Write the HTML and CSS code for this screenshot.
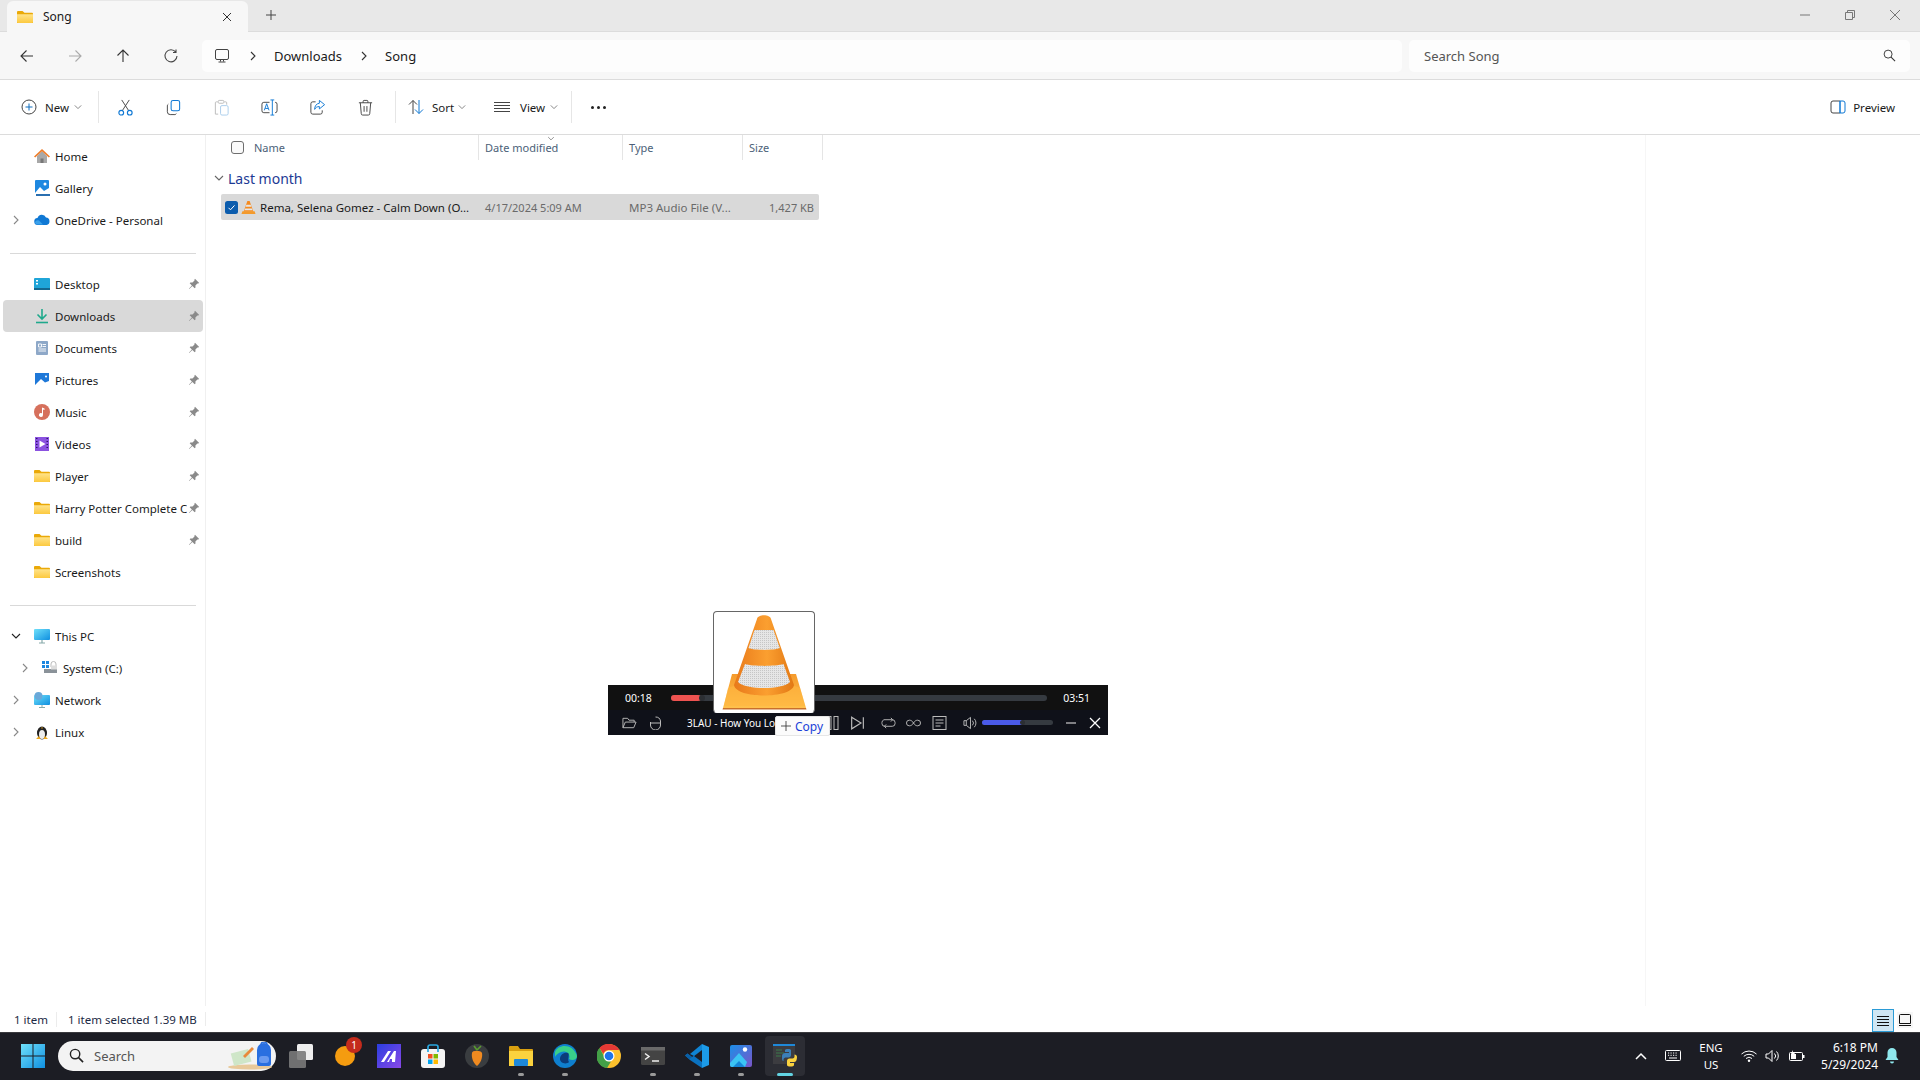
FILE: index.html
```html
<!DOCTYPE html>
<html lang="en">
<head>
<meta charset="utf-8">
<title>Song - File Explorer</title>
<link rel="stylesheet" href="styles.css">
</head>
<body>
<svg class="defs" width="0" height="0">
  <defs>
    <linearGradient id="fg" x1="0" y1="0" x2="0" y2="1"><stop offset="0" stop-color="#ffe38a"/><stop offset="1" stop-color="#fcc93f"/></linearGradient>
    <linearGradient id="orange" x1="0" y1="0" x2="1" y2="0"><stop offset="0" stop-color="#e8791a"/><stop offset=".55" stop-color="#fb9f30"/><stop offset="1" stop-color="#e27814"/></linearGradient>
    <pattern id="hatch" width="2" height="2" patternUnits="userSpaceOnUse"><rect width="2" height="2" fill="#e6e6e6"/><rect width="1" height="1" fill="#c6c6c6"/></pattern>
    <linearGradient id="baseg" x1="0" y1="0" x2="0" y2="1"><stop offset="0" stop-color="#f59a2c"/><stop offset="1" stop-color="#ffc14c"/></linearGradient>
    <linearGradient id="blue1" x1="0" y1="0" x2="1" y2="1"><stop offset="0" stop-color="#6fe0fa"/><stop offset="1" stop-color="#0f8fe0"/></linearGradient>
    <linearGradient id="ms" x1="0" y1="0" x2="1" y2="1"><stop offset="0" stop-color="#2a3ee0"/><stop offset="1" stop-color="#8a48e8"/></linearGradient>
    <linearGradient id="ph" x1="0" y1="0" x2="1" y2="1"><stop offset="0" stop-color="#1b8fe8"/><stop offset="1" stop-color="#7a55c8"/></linearGradient>
    <symbol id="folder" viewBox="0 0 16 16"><path d="M0 3a1 1 0 0 1 1-1h4.500l2 1.800H15a1 1 0 0 1 1 1V14H0z" fill="#eaa908"/><path d="M0 5.200h16V13a1 1 0 0 1-1 1H1a1 1 0 0 1-1-1z" fill="url(#fg)"/></symbol>
    <symbol id="pin" viewBox="0 0 12 12"><path d="M7 .8l4.200 4.200-1.100.6-.7-.2-2 2 .1 2.100-.8.7-2.300-2.300L1.200 11l-.3-.3 3-3.200-2.200-2.300.7-.8 2.100.1 2-2-.1-.7z" fill="#8a8a8a"/></symbol>
    <symbol id="chr" viewBox="0 0 10 10"><path d="M3 1l4 4-4 4" fill="none" stroke="currentColor" stroke-width="1.100"/></symbol>
    <symbol id="chd" viewBox="0 0 10 10"><path d="M1 3l4 4 4-4" fill="none" stroke="currentColor" stroke-width="1.100"/></symbol>
    <symbol id="cone" viewBox="0 0 16 16"><path d="M6.800 1h2.400l4 11.500H2.800z" fill="#f58a1f"/><path d="M5.700 5h4.600l.7 2.300H5z" fill="#e6e6e6"/><path d="M4.400 9h7.200l.7 2H3.700z" fill="#e6e6e6"/><path d="M1.500 12h13l1 3H.5z" fill="#f39a2c"/></symbol>
  </defs>
</svg>

<header class="tabstrip">
  <div class="tab">
    <svg class="ic16"><use href="#folder"/></svg>
    <span class="tab-title">Song</span>
    <svg class="tab-x" viewBox="0 0 10 10"><path d="M1 1l8 8M9 1l-8 8" stroke="#333" stroke-width="1" fill="none"/></svg>
  </div>
  <svg class="tab-plus" viewBox="0 0 12 12"><path d="M6 1v10M1 6h10" stroke="#444" stroke-width="1" fill="none"/></svg>
  <div class="winctl">
    <svg viewBox="0 0 10 10"><path d="M0 5h10" stroke="#777" stroke-width="1"/></svg>
    <svg viewBox="0 0 10 10"><path d="M.5 2.500h7v7h-7zM2.500 2.500v-2h7v7h-2" stroke="#777" stroke-width="1" fill="none"/></svg>
    <svg viewBox="0 0 10 10"><path d="M0 0l10 10M10 0L0 10" stroke="#777" stroke-width="1"/></svg>
  </div>
</header>

<nav class="navbar">
  <div class="navbtns">
    <svg viewBox="0 0 16 16"><path d="M14 8H2.500M7.500 2.500L2 8l5.500 5.500" stroke="#333" stroke-width="1.100" fill="none"/></svg>
    <svg viewBox="0 0 16 16"><path d="M2 8h11.500M8.500 2.500L14 8l-5.500 5.500" stroke="#aaa" stroke-width="1.100" fill="none"/></svg>
    <svg viewBox="0 0 16 16"><path d="M8 14V2.500M2.500 7.500L8 2l5.500 5.500" stroke="#333" stroke-width="1.100" fill="none"/></svg>
    <svg viewBox="0 0 16 16"><path d="M12.800 4.200A6 6 0 1 0 14 8M13 1.500v3h-3" stroke="#444" stroke-width="1.100" fill="none"/></svg>
  </div>
  <div class="address">
    <svg class="pc" viewBox="0 0 16 16"><rect x="1.500" y="1.500" width="13" height="10" rx="1.500" stroke="#444" fill="none"/><path d="M6.500 11.500v2M9.500 11.500v2M4.500 14h7" stroke="#444" fill="none"/></svg>
    <svg class="crumb-ch crumb-first"><use href="#chr"/></svg>
    <span class="crumb">Downloads</span>
    <svg class="crumb-ch"><use href="#chr"/></svg>
    <span class="crumb">Song</span>
  </div>
  <div class="search">
    <span>Search Song</span>
    <svg viewBox="0 0 14 14"><circle cx="5.500" cy="5.500" r="4.300" stroke="#333" fill="none"/><path d="M8.700 8.700l4.300 4.300" stroke="#333" stroke-width="1.200"/></svg>
  </div>
</nav>

<section class="toolbar">
  <div class="tb-text tb-new">
    <svg class="ic16" viewBox="0 0 16 16"><circle cx="8" cy="8" r="7" stroke="#444" fill="none"/><path d="M8 4.500v7M4.500 8h7" stroke="#0f6cbd" fill="none"/></svg>
    <span>New</span><svg class="mini"><use href="#chd"/></svg>
  </div>
  <i class="sep"></i>
  <div class="tb-icon"><svg viewBox="0 0 18 18"><path d="M5 1l7.500 11.500M13 1L5.500 12.500" stroke="#444" fill="none"/><circle cx="4.500" cy="14.500" r="2.500" stroke="#0f78d4" stroke-width="1.200" fill="none"/><circle cx="13.500" cy="14.500" r="2.500" stroke="#0f78d4" stroke-width="1.200" fill="none"/></svg></div>
  <div class="tb-icon"><svg viewBox="0 0 18 18"><rect x="6.500" y="1.500" width="9" height="11" rx="2" stroke="#0f78d4" stroke-width="1.100" fill="none"/><path d="M3.500 5.500a2 2 0 0 0-1 1.700v6.300a3 3 0 0 0 3 3h5a2 2 0 0 0 1.500-1" stroke="#444" fill="none"/></svg></div>
  <div class="tb-icon"><svg viewBox="0 0 18 18"><path d="M5 3H3.500a1 1 0 0 0-1 1v12h3M12 3h1.500a1 1 0 0 1 1 1v2" stroke="#bbb" fill="none"/><rect x="5.500" y="1.500" width="6" height="3" rx="1" stroke="#bbb" fill="none"/><rect x="8" y="7" width="8" height="10" rx="1.500" stroke="#a9cdec" fill="none"/></svg></div>
  <div class="tb-icon"><svg viewBox="0 0 18 18"><path d="M9 3.500H3a2 2 0 0 0-2 2v7a2 2 0 0 0 2 2h6M15 3.500a2 2 0 0 1 2 2v7a2 2 0 0 1-2 2" stroke="#444" fill="none"/><path d="M10 1h4M10 17h4M12 1v16" stroke="#0f78d4" fill="none"/><path d="M3.500 12l2.500-7 2.500 7M4.500 10h3" stroke="#0f78d4" fill="none"/></svg></div>
  <div class="tb-icon"><svg viewBox="0 0 18 18"><path d="M7 3H4a2 2 0 0 0-2 2v9a2 2 0 0 0 2 2h8a2 2 0 0 0 2-2v-2" stroke="#444" fill="none"/><path d="M11 1.500l5.500 4.500-5.500 4.500V8c-2.500 0-4 1-5 3 0-3.500 1.500-6 5-6.500z" stroke="#0f78d4" fill="none"/></svg></div>
  <div class="tb-icon"><svg viewBox="0 0 18 18"><path d="M2 4h14M6.500 4V2.500a1 1 0 0 1 1-1h3a1 1 0 0 1 1 1V4M3.500 4l1 11.500a1.500 1.500 0 0 0 1.500 1.500h6a1.500 1.500 0 0 0 1.500-1.500l1-11.500M7.500 7.500v6M10.500 7.500v6" stroke="#444" fill="none"/></svg></div>
  <i class="sep sep-b"></i>
  <div class="tb-text tb-sort">
    <svg class="ic16" viewBox="0 0 16 16"><path d="M5 15V1.500M1 5.500l4-4 4 4" stroke="#444" fill="none"/><path d="M11 1v13.500M7 10.500l4 4 4-4" stroke="#0f78d4" fill="none"/></svg>
    <span>Sort</span><svg class="mini"><use href="#chd"/></svg>
  </div>
  <div class="tb-text tb-view">
    <svg class="ic16" viewBox="0 0 16 16"><path d="M0 3.500h16M0 6.500h16M0 9.500h16M0 12.500h16" stroke="#444" fill="none"/></svg>
    <span>View</span><svg class="mini"><use href="#chd"/></svg>
  </div>
  <i class="sep sep-c"></i>
  <div class="dots"><i></i><i></i><i></i></div>
  <div class="tb-text tb-preview">
    <svg class="ic16" viewBox="0 0 16 16"><path d="M10 2H3a2 2 0 0 0-2 2v8a2 2 0 0 0 2 2h7" stroke="#444" fill="none"/><path d="M10 2h3a2 2 0 0 1 2 2v8a2 2 0 0 1-2 2h-3zM10 2v12" stroke="#0f78d4" fill="none"/></svg>
    <span>Preview</span>
  </div>
</section>

<main class="main">
  <aside class="side">
    <div class="row">
      <span class="arrow"></span>
      <svg class="ic16" viewBox="0 0 16 16"><path d="M3 8v7h10V8L8 3z" fill="#a8a8a8"/><path d="M6.500 15v-4.500h3V15z" fill="#777"/><path d="M0 8.500L8 1l8 7.500-1.200 1L8 3.300 1.200 9.500z" fill="#ee7c28"/></svg>
      <span class="label">Home</span>
    </div>
    <div class="row">
      <span class="arrow"></span>
      <svg class="ic16" viewBox="0 0 16 16"><rect x="1" y="0" width="14" height="14" rx="1" fill="#1e88e0"/><path d="M1 13l5-6 4 4 5-3v6H1z" fill="#fff"/><circle cx="11" cy="4" r="1.500" fill="#fff"/><rect x="2" y="14" width="14" height="2" fill="#2a6fb0"/></svg>
      <span class="label">Gallery</span>
    </div>
    <div class="row">
      <svg class="arrow"><use href="#chr"/></svg>
      <svg class="ic16" viewBox="0 0 16 16"><path d="M4 13a3.500 3.500 0 0 1-.5-7A4.500 4.500 0 0 1 12 5.500a3.800 3.800 0 0 1 .5 7.500z" fill="#0f78d4"/><path d="M1 10.500a3 3 0 0 1 4-2l4 4H3a2.500 2.500 0 0 1-2-2z" fill="#3aa0ea"/></svg>
      <span class="label">OneDrive - Personal</span>
    </div>
    <hr class="rule rule-b">
    <div class="row">
      <span class="arrow"></span>
      <svg class="ic16" viewBox="0 0 16 16"><rect y="2" width="16" height="12" rx="1" fill="#1fa5d8"/><rect y="12" width="16" height="2" fill="#14688f"/><path d="M2 4h2v1.500H2zM2 7h2v1.500H2z" fill="#fff"/></svg>
      <span class="label">Desktop</span><svg class="pin"><use href="#pin"/></svg>
    </div>
    <div class="row sel">
      <span class="arrow"></span>
      <svg class="ic16" viewBox="0 0 16 16"><path d="M8 1v9.500M3.500 6.500L8 11l4.500-4.500" stroke="#1fa98c" stroke-width="1.600" fill="none"/><path d="M2 14.500h12" stroke="#1fa98c" stroke-width="1.600"/></svg>
      <span class="label">Downloads</span><svg class="pin"><use href="#pin"/></svg>
    </div>
    <div class="row">
      <span class="arrow"></span>
      <svg class="ic16" viewBox="0 0 16 16"><rect x="2" y="1" width="12" height="14" rx="1" fill="#8ea8c8"/><path d="M4.500 4h3v3h-3zM8.500 4.500H12M8.500 6.500H12M4.500 9H12M4.500 11H12" stroke="#fff" stroke-width=".9" fill="none"/></svg>
      <span class="label">Documents</span><svg class="pin"><use href="#pin"/></svg>
    </div>
    <div class="row">
      <span class="arrow"></span>
      <svg class="ic16" viewBox="0 0 16 16"><rect x="1" y="1" width="14" height="14" fill="#1e78d8"/><path d="M1 13l6-6 4 3.500 4-1.500v6H1z" fill="#fff"/><circle cx="12" cy="4.500" r="1" fill="#fff"/></svg>
      <span class="label">Pictures</span><svg class="pin"><use href="#pin"/></svg>
    </div>
    <div class="row">
      <span class="arrow"></span>
      <svg class="ic16" viewBox="0 0 16 16"><circle cx="8" cy="8" r="8" fill="#d6705c"/><path d="M8 3.500l2.500 1v1.500L9 5.500V11a2 2 0 1 1-1-1.700z" fill="#fff"/></svg>
      <span class="label">Music</span><svg class="pin"><use href="#pin"/></svg>
    </div>
    <div class="row">
      <span class="arrow"></span>
      <svg class="ic16" viewBox="0 0 16 16"><rect x="1" y="1" width="14" height="14" fill="#8b52e0"/><path d="M5.500 4.500L11.500 8l-6 3.500z" fill="#fff"/><path d="M2 2.500h1.500M2 5.500h1.500M2 8.500h1.500M2 11.500h1.500M12.500 2.500H14M12.500 5.500H14M12.500 8.500H14M12.500 11.500H14" stroke="#2c1566" stroke-width="1.200"/></svg>
      <span class="label">Videos</span><svg class="pin"><use href="#pin"/></svg>
    </div>
    <div class="row">
      <span class="arrow"></span>
      <svg class="ic16"><use href="#folder"/></svg>
      <span class="label">Player</span><svg class="pin"><use href="#pin"/></svg>
    </div>
    <div class="row">
      <span class="arrow"></span>
      <svg class="ic16"><use href="#folder"/></svg>
      <span class="label">Harry Potter Complete Co</span><svg class="pin"><use href="#pin"/></svg>
    </div>
    <div class="row">
      <span class="arrow"></span>
      <svg class="ic16"><use href="#folder"/></svg>
      <span class="label">build</span><svg class="pin"><use href="#pin"/></svg>
    </div>
    <div class="row">
      <span class="arrow"></span>
      <svg class="ic16"><use href="#folder"/></svg>
      <span class="label">Screenshots</span>
    </div>
    <hr class="rule rule-b">
    <div class="row">
      <svg class="arrow dark"><use href="#chd"/></svg>
      <svg class="ic16" viewBox="0 0 16 16"><rect y="1" width="16" height="11" rx="1" fill="url(#blue1)"/><path d="M8 12v2.500M5 15h6" stroke="#8aa" stroke-width="1.200"/></svg>
      <span class="label">This PC</span>
    </div>
    <div class="row row-sub">
      <svg class="arrow"><use href="#chr"/></svg>
      <svg class="ic16" viewBox="0 0 16 16"><path d="M0 1h3v3H0zM4 1h3v3H4zM0 5h3v3H0zM4 5h3v3H4z" fill="#1e88e0"/><rect x="2" y="9" width="13" height="4" fill="#8a9299"/><path d="M9 7V4a2.500 2.500 0 0 1 5 0v3" stroke="#bbb" fill="none"/><rect x="9" y="5.500" width="6" height="4" fill="#ddd"/></svg>
      <span class="label">System (C:)</span>
    </div>
    <div class="row">
      <svg class="arrow"><use href="#chr"/></svg>
      <svg class="ic16" viewBox="0 0 16 16"><rect y="3" width="16" height="10" rx="1" fill="url(#blue1)"/><circle cx="4.500" cy="4" r="4" fill="#6aa8d8"/><path d="M8 13v2M5 15.500h6" stroke="#8aa" stroke-width="1"/></svg>
      <span class="label">Network</span>
    </div>
    <div class="row">
      <svg class="arrow"><use href="#chr"/></svg>
      <svg class="ic16" viewBox="0 0 16 16"><ellipse cx="8" cy="9" rx="5" ry="6.500" fill="#222"/><ellipse cx="8" cy="10.500" rx="3" ry="4.500" fill="#eee"/><path d="M7 3.500h2l-1 1.500z" fill="#eda71c"/><path d="M2 15l3-3 1.500 3zM14 15l-3-3-1.500 3z" fill="#eda71c"/></svg>
      <span class="label">Linux</span>
    </div>
  </aside>

  <section class="files">
    <svg class="sortmark"><use href="#chd"/></svg>
    <div class="cols">
      <div class="col col-name"><span class="box"></span><span>Name</span></div>
      <div class="col">Date modified</div>
      <div class="col">Type</div>
      <div class="col">Size</div>
    </div>
    <div class="group">
      <svg class="group-ch"><use href="#chd"/></svg>
      <span>Last month</span>
    </div>
    <div class="file">
      <div class="file-name">
        <svg class="check" viewBox="0 0 13 13"><rect width="13" height="13" rx="2.500" fill="#0b5cad"/><path d="M3.500 6.800l2 2 4-4.400" stroke="#fff" fill="none"/></svg>
        <svg class="ic15"><use href="#cone"/></svg>
        <span>Rema, Selena Gomez - Calm Down (O...</span>
      </div>
      <div class="file-meta">4/17/2024 5:09 AM</div>
      <div class="file-meta file-type">MP3 Audio File (V...</div>
      <div class="file-meta file-size">1,427 KB</div>
    </div>
    <div class="preview-line"></div>
  </section>
</main>

<footer class="status">
  <span class="st-a">1 item</span>
  <span class="st-b">1 item selected</span>
  <span class="st-c">1.39 MB</span>
  <i class="st-line"></i>
  <div class="views">
    <span class="v v-on"><svg viewBox="0 0 14 14"><path d="M1 2.500h12M1 5.500h12M1 8.500h12M1 11.500h12" stroke="#111" fill="none"/></svg></span>
    <span class="v"><svg viewBox="0 0 14 14"><path d="M2.500 1.500h9a1 1 0 0 1 1 1v8h-11v-8a1 1 0 0 1 1-1zM1 12.500h12" stroke="#111" fill="none"/></svg></span>
  </div>
</footer>

<div class="taskbar">
  <div class="slot">
    <svg class="t24" viewBox="0 0 24 24"><path d="M0 0h11.500v11.500H0zM12.500 0H24v11.500H12.500zM0 12.500h11.500V24H0zM12.500 12.500H24V24H12.500z" fill="url(#blue1)"/></svg>
  </div>
  <div class="tsearch">
    <svg viewBox="0 0 16 16"><circle cx="6.500" cy="6.500" r="5" stroke="#222" stroke-width="1.500" fill="none"/><path d="M10.200 10.200l4.800 4.800" stroke="#222" stroke-width="1.700"/></svg>
    <span>Search</span>
    <svg class="tsearch-art" viewBox="0 0 48 28"><ellipse cx="22" cy="25" rx="22" ry="2.500" fill="#e8c99a"/><rect x="4" y="9" width="18" height="13" fill="#cfe6c8" transform="rotate(-15 13 15)"/><path d="M15 14l9-9 2 2-9 9z" fill="#e88a3a"/><path d="M29 22V8a7 7 0 0 1 14 0v14a2 2 0 0 1-2 2H31a2 2 0 0 1-2-2z" fill="#2a6fe0"/><path d="M33 3a3 3 0 0 1 6 0" stroke="#2a6fe0" stroke-width="1.500" fill="none"/><rect x="31" y="14" width="10" height="7" rx="3" fill="#6a9af0"/></svg>
  </div>
  <div class="slot">
    <svg class="t24" viewBox="0 0 24 24"><rect x="8" y="0" width="16" height="16" rx="1.500" fill="#eee"/><rect x="0" y="7" width="17" height="17" rx="1.500" fill="#7a7a7a" fill-opacity=".9"/></svg>
  </div>
  <div class="slot">
    <svg class="t24" viewBox="0 0 24 24"><circle cx="12" cy="12" r="10" fill="#f59c10"/></svg>
    <b class="badge">1</b>
  </div>
  <div class="slot">
    <svg class="t24" viewBox="0 0 24 24"><rect width="24" height="24" fill="url(#ms)"/><path d="M4 18l7-11h3L7 18zM10 18l7-11h2l-1 11h-3v-3h-2l-1 3z" fill="#fff"/></svg>
  </div>
  <div class="slot">
    <svg class="t24" viewBox="0 0 24 24"><rect y="5" width="24" height="19" rx="3" fill="#f4f4f4"/><path d="M7 8V3a2 2 0 0 1 2-2h6a2 2 0 0 1 2 2v5" stroke="#2aa8e0" stroke-width="1.700" fill="none"/><path d="M7 10h4.500v4.500H7z" fill="#f25022"/><path d="M12.500 10H17v4.500h-4.500z" fill="#7fba00"/><path d="M7 15.500h4.500V20H7z" fill="#00a4ef"/><path d="M12.500 15.500H17V20h-4.500z" fill="#ffb900"/></svg>
  </div>
  <div class="slot">
    <svg class="t24" viewBox="0 0 24 24"><circle cx="12" cy="12" r="12" fill="#3a3d40"/><path d="M7 9c0-3 9-3 10 0 1 5-2 11-5 13-3-2-6-8-5-13z" fill="#f08a20"/><path d="M12 6l-3-4M12 6l4-4" stroke="#5a9a30" stroke-width="1.700"/></svg>
  </div>
  <div class="slot on">
    <svg class="t24" viewBox="0 0 24 24"><path d="M0 3a1 1 0 0 1 1-1h8l2 3h12a1 1 0 0 1 1 1v16H0z" fill="#d9a010"/><path d="M0 7h24v15H0z" fill="#fbd23e"/><rect x="5" y="15" width="14" height="7" rx="1" fill="#1e88d8"/></svg>
  </div>
  <div class="slot on">
    <svg class="t24" viewBox="0 0 24 24"><circle cx="12" cy="12" r="12" fill="#0f7fce"/><path d="M2 8C5 0 20-1 24 12c0 4-5 5-8 3 2-5-3-9-8-7-3 1-5 3-6 5z" fill="#39d08a"/><path d="M7 15c0-4 4-7 8-6 2 1-1 7 1 9-3 3-9 1-9-3z" fill="#0b3c7a"/></svg>
  </div>
  <div class="slot">
    <svg class="t24" viewBox="0 0 24 24"><circle cx="12" cy="12" r="12" fill="#fbc02d"/><path d="M12 0a12 12 0 0 1 10.400 6H12a6 6 0 0 0-5.700 4L2.500 4A12 12 0 0 1 12 0z" fill="#e53935"/><path d="M2.500 4l5 9a6 6 0 0 0 6.500 4.500L10 24A12 12 0 0 1 2.500 4z" fill="#43a047"/><circle cx="12" cy="12" r="5.500" fill="#fff"/><circle cx="12" cy="12" r="4.300" fill="#1e74e8"/></svg>
  </div>
  <div class="slot on">
    <svg class="t24" viewBox="0 0 24 24"><rect y="3" width="24" height="18" rx="1.500" fill="#444"/><rect y="3" width="24" height="3.500" fill="#6a6a6a"/><path d="M4 9.500l4 3-4 3" stroke="#eee" stroke-width="1.500" fill="none"/><path d="M11 17h7" stroke="#eee" stroke-width="1.500"/></svg>
  </div>
  <div class="slot on">
    <svg class="t24" viewBox="0 0 24 24"><path d="M17 0l7 3v18l-7 3z" fill="#1c9be8"/><path d="M17 0v6L7 13l-4.500-3.500L0 11.500l5 4.500 12 8 0-6-8-6 8-6z" fill="#0a72c0"/><path d="M0 11.500l2.500-2L7 13l-2.500 2z" fill="#0a5fa5"/><path d="M5 10L17 0v6L9 12z" fill="#0f84d4"/></svg>
  </div>
  <div class="slot on">
    <svg class="t24" viewBox="0 0 24 24"><rect x="1" y="1" width="22" height="22" rx="2" fill="url(#ph)"/><circle cx="16" cy="5.500" r="2.200" fill="#fff"/><path d="M1 19l9-10 8 9-2 5H3a2 2 0 0 1-2-2z" fill="#3bc4f4"/><path d="M4 23l6-6 6 6z" fill="#1586d8"/></svg>
  </div>
  <div class="slot on active">
    <svg class="t24" viewBox="0 0 24 24"><rect width="22" height="20" fill="#3c3c40"/><rect width="22" height="2" fill="#1e88d8"/><path d="M3 6h6M3 9h8M3 12h5" stroke="#3a7a4a" stroke-width="1.200"/><path d="M9 13c0-3 1-4 4-4h3v-1h-4V6c0-1.500 6-1.500 6 0v5c0 1.500-1 2.500-2.500 2.500h-3c-1 0-2 1-2 2V17c-1.500 0-1.500-2-1.500-4z" fill="#3b7fb8"/><path d="M24 13c0 3-1 5-3 5h-4v1h4v2c0 2-7 2-7 0v-4c0-1.500 1-2.500 2.500-2.500h3c1 0 2-1 2-2v-2c1.500 0 2.500 1 2.500 2.500z" fill="#fbd23e"/></svg>
  </div>
  <div class="tray">
    <svg class="tr-up" viewBox="0 0 12 8"><path d="M1 7l5-5 5 5" stroke="#fff" stroke-width="1.500" fill="none"/></svg>
    <svg class="tr-kb" viewBox="0 0 16 11"><rect x=".5" y=".5" width="15" height="10" rx="1" stroke="#fff" fill="none"/><path d="M3 3h1.200M5.500 3h1.200M8 3h1.200M10.500 3h1.200M3 5.300h1.200M5.500 5.300h1.200M8 5.300h1.200M10.500 5.300h1.200M4 8h8" stroke="#fff"/></svg>
    <div class="lang"><span>ENG</span><span>US</span></div>
    <svg class="tr-wifi" viewBox="0 0 16 12"><path d="M.5 4a11 11 0 0 1 15 0M2.800 6.300a7.800 7.800 0 0 1 10.400 0M5 8.500a4.500 4.500 0 0 1 6 0" stroke="#fff" fill="none"/><circle cx="8" cy="10.700" r="1.200" fill="#fff"/></svg>
    <svg class="tr-vol" viewBox="0 0 16 14"><path d="M1 5h2.500L7 1.500v11L3.500 9H1z" stroke="#fff" fill="none"/><path d="M9.500 4.500a3.500 3.500 0 0 1 0 5M11.500 2.500a6.500 6.500 0 0 1 0 9" stroke="#fff" fill="none"/></svg>
    <svg class="tr-bat" viewBox="0 0 16 12"><rect x=".5" y="2.500" width="13" height="8" rx="1" stroke="#fff" fill="none"/><rect x="14" y="5" width="1.500" height="3" fill="#fff"/><rect x="2" y="4" width="5" height="5" fill="#fff"/><path d="M4 0L2 4h2l-1 3 3-4H4z" fill="#fff"/></svg>
    <div class="clock"><span>6:18 PM</span><span>5/29/2024</span></div>
    <svg class="tr-bell" viewBox="0 0 14 16"><path d="M7 0a4.500 4.500 0 0 1 4.500 4.500V9l2 3H.5l2-3V4.500A4.500 4.500 0 0 1 7 0z" fill="#8fe8ee"/><path d="M5 13.500h4a2 2 0 0 1-4 0z" fill="#8fe8ee"/></svg>
  </div>
</div>

<div class="player">
  <div class="pl-top">
    <span class="pl-time">00:18</span>
    <div class="pl-track"><i class="pl-red"></i><i class="pl-knob"></i></div>
    <span class="pl-time pl-end">03:51</span>
  </div>
  <div class="pl-bottom">
    <svg class="p-folder" viewBox="0 0 16 14"><path d="M1 12V2h5l1.500 2h5.500v2M1 12l2.500-6H15l-2.500 6z" stroke="#bbb" fill="none"/></svg>
    <svg class="p-mouse" viewBox="0 0 12 14"><path d="M1 6v3a5 5 0 0 0 10 0V5a5 5 0 0 0-5-4M1 7h10" stroke="#bbb" fill="none"/></svg>
    <span class="p-title">3LAU - How You Lo</span>
    <svg class="p-pause" viewBox="0 0 12 14"><rect x=".5" y=".5" width="4" height="13" stroke="#bbb" fill="none"/><rect x="7.500" y=".5" width="4" height="13" stroke="#bbb" fill="none"/></svg>
    <svg class="p-next" viewBox="0 0 12 12"><path d="M1 1l8 5-8 5zM11 1v10" stroke="#bbb" fill="none"/></svg>
    <svg class="p-rep" viewBox="0 0 16 12"><path d="M3 2.500h9a3 3 0 0 1 3 3v1a3 3 0 0 1-3 3H4a3 3 0 0 1-3-3v-1a3 3 0 0 1 2-2.800M10.500.5l2 2-2 2M5.500 7.500l-2 2 2 2" stroke="#bbb" fill="none"/></svg>
    <svg class="p-inf" viewBox="0 0 16 8"><path d="M8 4C6.500 1.500 5 1 3.500 1a3 3 0 0 0 0 6C5 7 6.500 6.500 8 4c1.500-2.500 3-3 4.500-3a3 3 0 0 1 0 6C11 7 9.500 6.500 8 4z" stroke="#bbb" fill="none"/></svg>
    <svg class="p-list" viewBox="0 0 14 14"><rect x=".5" y=".5" width="13" height="13" stroke="#bbb" fill="none"/><path d="M3 4h8M3 7h8M3 10h5" stroke="#bbb"/></svg>
    <svg class="p-vol" viewBox="0 0 16 14"><path d="M1 4.500h2.500L8 1v12L3.500 9.500H1zM3.500 4.500v5" stroke="#bbb" fill="none"/><path d="M10 4.500a3.500 3.500 0 0 1 0 5M12 2.500a6.500 6.500 0 0 1 0 9" stroke="#bbb" fill="none"/></svg>
    <div class="p-volbar"><i class="p-volfill"></i><i class="p-volknob"></i></div>
    <svg class="p-min" viewBox="0 0 10 10"><path d="M0 5h10" stroke="#ccc" stroke-width="1.200"/></svg>
    <svg class="p-x" viewBox="0 0 12 12"><path d="M1 1l10 10M11 1L1 11" stroke="#fff" stroke-width="1.300"/></svg>
  </div>
</div>

<div class="thumb">
  <svg viewBox="0 0 100 100">
    <path d="M18 62h64l10 34H9z" fill="url(#baseg)"/>
    <path d="M9 96h83l.5 1.500H8.500z" fill="#c9702a"/>
    <path d="M14 76c10-6 62-6 72 0l5 18H10z" fill="#ffb640" fill-opacity=".55"/>
    <path d="M43 7c1-5 13-5 14 0l23 66c-2 14-58 14-60 0z" fill="url(#orange)"/>
    <path d="M40.500 18h19l6.300 18c-6 2.500-25 2.500-31.300 0z" fill="url(#hatch)"/>
    <path d="M31 52c8 2.500 30 2.500 38.500 0L76 70c-8 8-44 8-52 0z" fill="url(#hatch)"/>
  </svg>
</div>

<div class="copytip">
  <svg viewBox="0 0 12 12"><path d="M6 0v12M0 6h12" stroke="#333" fill="none"/></svg>
  <span>Copy</span>
</div>
</body>
</html>
```

FILE: styles.css
```css
* { box-sizing: border-box; }
html, body { height: 100%; }
body {
  margin: 0;
  height: 100vh;
  overflow: hidden;
  display: flex;
  flex-direction: column;
  position: relative;
  background: #fff;
  color: #1a1a1a;
  font: 12px "Noto Sans", "Open Sans", sans-serif;
}
svg { display: block; flex: none; }
.defs { position: absolute; }
.ic16 { width: 16px; height: 16px; }
.ic15 { width: 15px; height: 15px; }

/* title / tab strip */
.tabstrip {
  height: 32px;
  flex: none;
  display: flex;
  align-items: flex-end;
  padding-left: 7px;
  background: #e8e8e8;
  border-bottom: 1px solid #dcdcdc;
}
.tab {
  width: 241px;
  height: 31px;
  margin-bottom: -1px;
  display: flex;
  align-items: center;
  padding: 0 16px 0 10px;
  background: #f7f7f7;
  border-radius: 6px 6px 0 0;
}
.tab-title { margin-left: 10px; font-size: 12px; }
.tab-x { width: 10px; height: 10px; margin-left: auto; }
.tab-plus { width: 12px; height: 12px; margin: 0 0 10px 17px; }
.winctl { margin-left: auto; align-self: flex-start; display: flex; gap: 35px; padding: 10px 20px 0 0; }
.winctl svg { width: 10px; height: 10px; }

/* nav bar */
.navbar {
  height: 48px;
  flex: none;
  display: flex;
  align-items: center;
  background: #f7f7f7;
  border-bottom: 1px solid #dcdcdc;
}
.navbtns { width: 202px; display: flex; gap: 32px; padding-left: 19px; }
.navbtns svg { width: 16px; height: 16px; }
.address, .search {
  height: 32px;
  display: flex;
  align-items: center;
  background: #fdfdfd;
  border-radius: 5px;
  font-size: 13px;
}
.address { width: 1200px; padding-left: 12px; }
.pc { width: 16px; height: 16px; }
.crumb-ch { width: 10px; height: 10px; margin: 0 16px 0 17px; color: #333; }
.crumb-first { margin: 0 16px 0 18px; }
.search { width: 501px; margin-left: 7px; padding: 0 14px 0 15px; color: #555; justify-content: space-between; }
.search svg { width: 13px; height: 13px; }

/* command bar */
.toolbar {
  height: 55px;
  flex: none;
  display: flex;
  align-items: center;
  background: #fff;
  border-bottom: 1px solid #dcdcdc;
  padding-left: 21px;
  padding-right: 25px;
  font-size: 11.5px;
}
.tb-text { display: flex; align-items: center; }
.tb-new { width: 70px; gap: 8px; }
.tb-new .mini { margin-left: -3px; }
.mini { width: 8px; height: 8px; color: #777; }
.tb-sort { width: 76px; gap: 8px; margin-left: 12px; }
.tb-sort .mini { margin-left: -4px; }
.tb-view { width: 77px; gap: 10px; margin-left: 10px; }
.tb-view .mini { margin-left: -5px; }
.sep { width: 1px; height: 32px; background: #e6e6e6; flex: none; margin: 0 2px 0 7px; }
.sep-b { margin: 0 0 0 6px; }
.sep-c { margin: 0; }
.tb-icon { width: 48px; display: flex; justify-content: center; }
.tb-icon svg { width: 17px; height: 17px; }
.dots { display: flex; gap: 3px; margin-left: 19px; }
.dots i { width: 3px; height: 3px; border-radius: 50%; background: #222; }
.tb-preview { margin-left: auto; gap: 7px; }

/* main */
.main { flex: 1; min-height: 0; display: flex; }
.side {
  width: 206px;
  flex: none;
  padding: 5px 2px 0 3px;
  border-right: 1px solid #f0f0f0;
  font-size: 11.5px;
}
.row {
  height: 32px;
  display: flex;
  align-items: center;
  border-radius: 4px;
  padding-right: 3px;
}
.row .ic16 { margin-left: 13px; }
.arrow { width: 10px; height: 10px; margin-left: 8px; color: #888; flex: none; }
span.arrow { display: block; }
.arrow.dark { color: #222; }
.row-sub { padding-left: 9px; }
.row-sub .ic16 { margin-left: 12px; }
.label {
  margin-left: 5px;
  flex: 1;
  min-width: 0;
  white-space: nowrap;
  overflow: hidden;
}
.pin { width: 12px; height: 12px; margin-left: 1px; }
.sel { background: #d9d9d9; }
.rule {
  margin: 16px 7px 14px;
  border: 0;
  height: 1px;
  background: #d9d9d9;
}
.rule-b { margin-top: 17px; }

/* file list */
.files { flex: 1; position: relative; }
.sortmark { position: absolute; left: 341px; top: 0; width: 8px; height: 7px; color: #777; }
.cols {
  height: 25px;
  display: grid;
  grid-template-columns: 273px 144px 120px 80px;
  color: #4c5f78;
  font-size: 11px;
}
.col {
  display: flex;
  align-items: center;
  padding-left: 6px;
  border-right: 1px solid #e5e5e5;
}
.col-name { padding-left: 25px; gap: 10px; }
.box { width: 13px; height: 13px; border: 1px solid #6e6e6e; border-radius: 3px; background: #fafafa; }
.group {
  height: 34px;
  display: flex;
  align-items: center;
  padding: 2px 0 0 8px;
  font-size: 14px;
  color: #1d3a94;
}
.group-ch { width: 10px; height: 10px; margin-right: 4px; color: #666; }
.file {
  width: 598px;
  height: 26px;
  margin-left: 15px;
  display: grid;
  grid-template-columns: 257px 144px 118px 74px;
  align-items: center;
  background: #d9d9d9;
  border-radius: 2px;
  font-size: 11.5px;
}
.file-name { display: flex; align-items: center; padding-left: 4px; }
.check { width: 13px; height: 13px; }
.file-name .ic15 { margin-left: 3px; }
.file-name span { margin-left: 4px; white-space: nowrap; }
.file-meta { padding-left: 7px; color: #6a6a6a; white-space: nowrap; font-size: 11px; }
.file-type { font-size: 11.5px; }
.file-size { text-align: right; padding: 0; }
.preview-line { position: absolute; left: 1439px; top: 0; bottom: 0; width: 1px; background: #f6f6f6; }

/* status bar */
.status {
  height: 26px;
  flex: none;
  display: flex;
  align-items: center;
  padding-left: 14px;
  font-size: 11.5px;
  color: #1c2a44;
}
.st-a { width: 43px; border-right: 1px solid #ececec; }
.st-b { margin-left: 11px; width: 85px; white-space: nowrap; }
.st-c { width: 52px; }
.st-line { width: 1px; height: 14px; background: #ececec; }
.views { margin-left: auto; display: flex; align-items: flex-end; gap: 3px; padding-right: 7px; align-self: flex-end; }
.v { width: 16px; height: 16px; background: #f6f6f6; display: flex; align-items: center; justify-content: center; margin-bottom: 4px; }
.v svg { width: 14px; height: 14px; }
.v-on { width: 22px; height: 23px; background: #cfe6f3; border: 1px solid #2b9bd6; margin-bottom: 0; }

/* taskbar */
.taskbar {
  height: 48px;
  flex: none;
  display: flex;
  align-items: center;
  padding: 0 0 2px 11px;
  background: #1c1d24;
  border-top: 1px solid #3a3a3e;
  color: #fff;
}
.slot {
  width: 44px;
  height: 40px;
  flex: none;
  position: relative;
  display: flex;
  align-items: center;
  justify-content: center;
  border-radius: 4px;
}
.t24 { width: 24px; height: 24px; }
.slot.on::after {
  content: "";
  position: absolute;
  left: 19px;
  bottom: 0;
  width: 6px;
  height: 3px;
  border-radius: 2px;
  background: #9a9a9a;
}
.active { background: #2c2d34; width: 40px; margin-left: 2px; }
.slot.active::after { left: 12px; width: 16px; background: #62d3e3; }
.badge {
  position: absolute;
  left: 23px;
  top: 1px;
  width: 16px;
  height: 16px;
  border-radius: 50%;
  background: #c42b1c;
  font: 10px/16px "Noto Sans", sans-serif;
  text-align: center;
}
.tsearch {
  width: 218px;
  height: 30px;
  margin: 0 3px;
  flex: none;
  display: flex;
  align-items: center;
  padding-left: 11px;
  border-radius: 15px;
  background: #f3f3f3;
  color: #555;
  font-size: 13px;
}
.tsearch svg:first-child { width: 15px; height: 15px; }
.tsearch span { margin-left: 10px; }
.tsearch-art { width: 48px; height: 28px; margin-left: auto; }
.tray { margin-left: auto; display: flex; align-items: center; padding-right: 21px; font-size: 11.5px; }
.tr-up { width: 12px; height: 8px; }
.tr-kb { width: 16px; height: 11px; margin-left: 18px; }
.lang { width: 40px; margin-left: 10px; display: flex; flex-direction: column; align-items: center; line-height: 17px; }
.tr-wifi { width: 16px; height: 12px; margin-left: 10px; }
.tr-vol { width: 16px; height: 14px; margin-left: 8px; }
.tr-bat { width: 16px; height: 12px; margin-left: 8px; }
.clock { width: 65px; margin-left: 8px; display: flex; flex-direction: column; align-items: flex-end; line-height: 17px; white-space: nowrap; font-size: 12px; }
.tr-bell { width: 14px; height: 16px; margin-left: 7px; }

/* floating mini player */
.player {
  position: absolute;
  left: 608px;
  top: 685px;
  width: 500px;
  height: 50px;
  color: #fff;
  font-size: 10.5px;
}
.pl-top { height: 25px; background: #111; display: flex; align-items: center; padding: 0 18px 0 17px; }
.pl-time { width: 46px; }
.pl-end { width: auto; margin-left: 16px; }
.pl-track { flex: 1; height: 6px; border-radius: 3px; background: #353a40; position: relative; }
.pl-red { position: absolute; left: 0; top: 0; width: 30px; height: 6px; border-radius: 3px; background: #ef5350; }
.pl-knob { position: absolute; left: 28px; top: 0; width: 6px; height: 6px; border-radius: 50%; background: #2c2f33; }
.pl-bottom { height: 25px; background: #0f1119; display: flex; align-items: center; padding-left: 14px; }
.pl-bottom svg { width: 15px; height: 14px; }
.p-mouse { margin-left: 11px; }
.p-title { width: 138px; margin-left: 24px; white-space: nowrap; font-size: 10px; }
.p-next { margin-left: 10px; }
.p-rep { margin-left: 16px; }
.p-inf { margin-left: 10px; }
.p-list { margin-left: 11px; }
.p-vol { margin-left: 16px; }
.p-volbar { width: 71px; height: 5px; margin-left: 4px; border-radius: 3px; background: #353a40; position: relative; }
.p-volfill { position: absolute; left: 0; top: 0; width: 41px; height: 5px; border-radius: 3px; background: #4a5ae8; }
.p-volknob { position: absolute; left: 38px; top: 0; width: 5px; height: 5px; border-radius: 50%; background: #2c2f33; }
.pl-bottom .p-min { width: 10px; height: 10px; margin-left: 13px; }
.pl-bottom .p-x { width: 12px; height: 12px; margin-left: 13px; }

.thumb {
  position: absolute;
  left: 713px;
  top: 611px;
  width: 102px;
  height: 102px;
  background: #fff;
  border: 1px solid #666;
  border-bottom-color: #fff;
  border-radius: 4px;
}
.thumb svg { width: 100px; height: 100px; }
.copytip {
  position: absolute;
  left: 775px;
  top: 716px;
  width: 55px;
  height: 20px;
  display: flex;
  align-items: center;
  gap: 4px;
  padding-left: 5px;
  background: #fbfbfb;
  border: 1px solid #e6e6e6;
  border-radius: 2px;
  color: #1a3fd8;
  font-size: 12px;
}
.copytip svg { width: 10px; height: 10px; }
```
